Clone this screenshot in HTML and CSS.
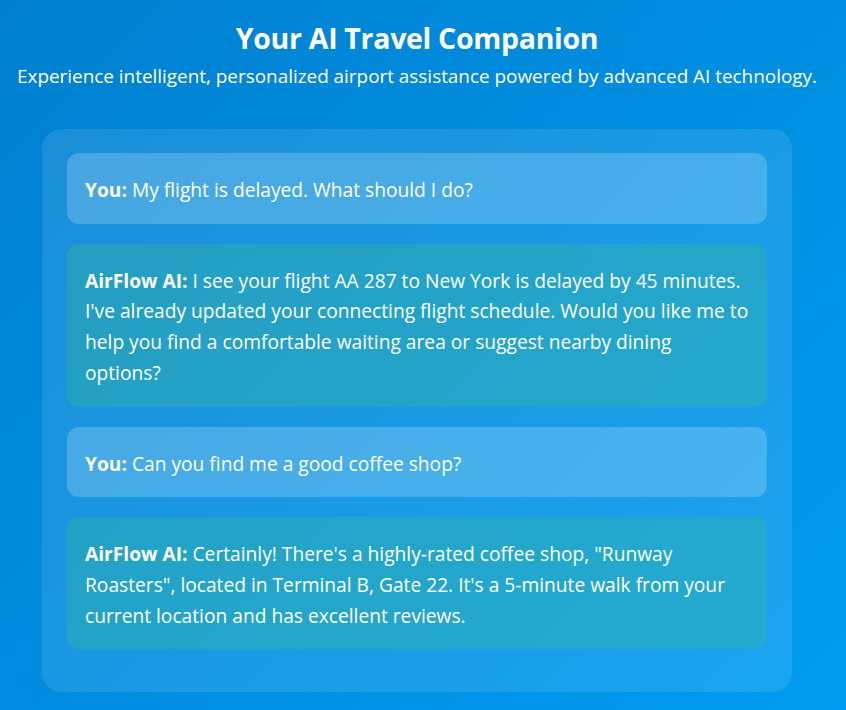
FILE: index.html
```html
<!DOCTYPE html>
<html lang="en">
<head>
<meta charset="utf-8">
<title>Your AI Travel Companion</title>
<link rel="stylesheet" href="styles.css">
</head>
<body>
<section class="hero">
  <h1 class="title">Your AI Travel Companion</h1>
  <p class="subtitle">Experience intelligent, personalized airport assistance powered by advanced AI technology.</p>
  <div class="chat">
    <div class="msg msg-user"><strong>You:</strong> My flight is delayed. What should I do?</div>
    <div class="msg msg-ai"><strong>AirFlow AI:</strong> I see your flight AA 287 to New York is delayed by 45 minutes. I've already updated your connecting flight schedule. Would you like me to help you find a comfortable waiting area or suggest nearby dining options?</div>
    <div class="msg msg-user"><strong>You:</strong> Can you find me a good coffee shop?</div>
    <div class="msg msg-ai"><strong>AirFlow AI:</strong> Certainly! There's a highly-rated coffee shop, "Runway Roasters", located in Terminal B, Gate 22. It's a 5-minute walk from your current location and has excellent reviews.</div>
  </div>
</section>
</body>
</html>
```

FILE: styles.css
```css
html, body {
  margin: 0;
  padding: 0;
  height: 100%;
}
body {
  background: linear-gradient(135deg, #007fd0 0%, #008ee0 50%, #009bf0 100%);
  font-family: "Open Sans", "Noto Sans", sans-serif;
  color: #fff;
  overflow: hidden;
}
.hero {
  display: flex;
  flex-direction: column;
  align-items: center;
  padding: 19px 12px 0 0;
}
.title {
  margin: 0;
  font-size: 28.5px;
  font-weight: 700;
  line-height: 38px;
  letter-spacing: -0.3px;
}
.subtitle {
  margin: 6px 0 0;
  font-size: 18.9px;
  line-height: 26px;
}
.chat {
  margin-top: 40px;
  width: 750px;
  box-sizing: border-box;
  padding: 24px 25px 43px;
  border-radius: 20px;
  background: rgba(255, 255, 255, 0.1);
  display: flex;
  flex-direction: column;
  gap: 20px;
}
.msg {
  padding: 22px 17px 18px 18px;
  border-radius: 12px;
  font-size: 19.2px;
  line-height: 1.6;
}
.msg strong {
  font-weight: 700;
}
.msg-user {
  background: rgba(255, 255, 255, 0.2);
}
.msg-ai {
  background: rgba(60, 190, 140, 0.3);
}
```
